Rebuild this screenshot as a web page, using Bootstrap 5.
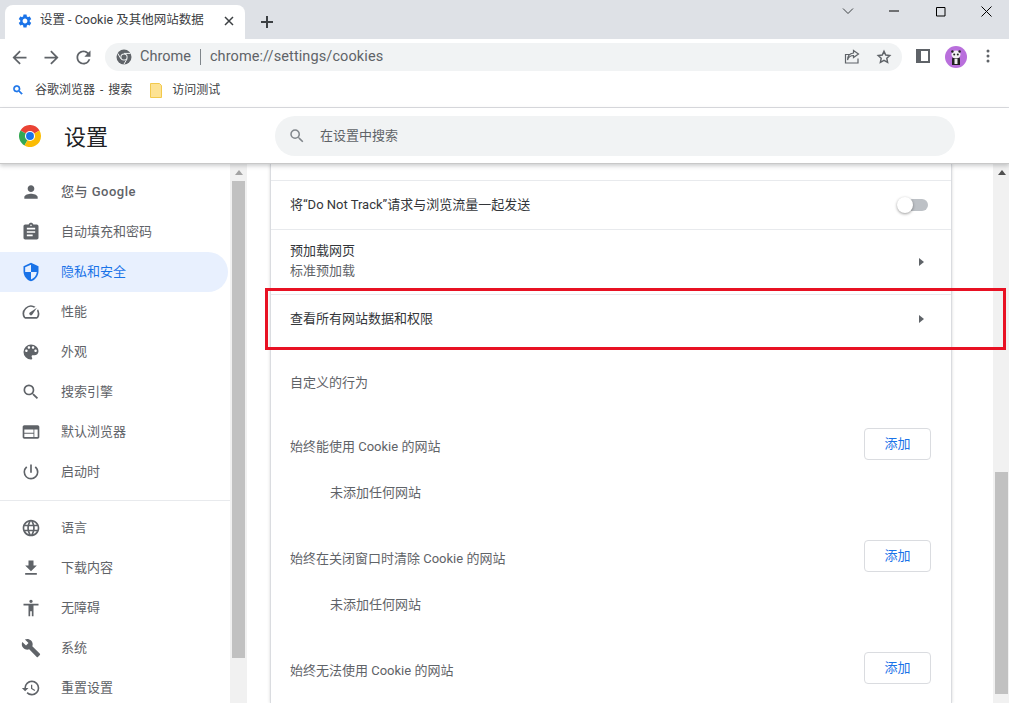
<!DOCTYPE html>
<html lang="zh-CN">
<head>
    <meta charset="UTF-8">
    <title>设置 - Cookie 及其他网站数据</title>
    <link href="https://cdn.jsdelivr.net/npm/bootstrap@5.3.0/dist/css/bootstrap.min.css" rel="stylesheet">
    <style>
        html, body { height: 100%; overflow: hidden; }
        body { font-family: Roboto, "Noto Sans CJK SC", sans-serif; font-size: 13px; color: #33363a; background: #fff; }
        .shell { width: 1009px; height: 703px; position: relative; }

        .tabstrip { height: 39px; background: #dee1e6; padding-left: 5px; }
        .chrome-tab { width: 240px; height: 34px; margin-top: 5px; background: #fff; border-radius: 8px 8px 0 0; padding: 0 11px 3px 12px; font-size: 12.5px; color: #3c4043; }
        .tab-title { margin-left: 7px; white-space: nowrap; }
        .newtab { margin-left: 8px; margin-top: 5px; width: 28px; height: 34px; }
        .win-btns { margin-left: auto; height: 22px; }
        .win-btn { width: 46px; height: 22px; }

        .toolbar { height: 36px; padding: 4px 0 0 9px; }
        .nav-ic { width: 32px; height: 28px; }
        .omni { width: 797px; height: 28px; background: #f1f3f4; border-radius: 14px; padding: 0 10px 0 11px; font-size: 14.5px; color: #5f6368; margin-left: 0; }
        .omni-sep { width: 1px; height: 16px; background: #80868b; margin: 0 9px; }
        .omni-url { letter-spacing: .1px; }
        .tool-right { margin-left: 14px; }
        .panel-ic { width: 29px; }
        .avatar { margin-top: 3px; }
        .dots { margin-left: 19px; }

        .bookmarks { height: 30px; padding: 0 0 2px 12px; font-size: 12px; color: #3c4043; border-bottom: 1px solid #dadce0; box-sizing: content-box; }
        .bm-item { margin-right: 18px; }
        .bm-label { margin-left: 11px; word-spacing: 2px; }
        .bm-label-2 { margin-left: 10px; }

        .settings-head { height: 56px; border-bottom: 1px solid #c8c8c8; box-shadow: 0 2px 4px rgba(60,64,67,.25); position: relative; z-index: 3; background: #fff; }
        .head-left { width: 275px; padding-left: 19px; }
        .head-title { font-size: 22px; margin: 3px 0 0 23px; color: #202124; }
        .head-search { width: 680px; height: 40px; background: #f1f3f4; border-radius: 20px; padding-left: 13px; color: #5f6368; }
        .head-search span { margin-left: 14px; }

        .workarea { height: 539px; overflow: hidden; }
        .side { width: 230px; padding-top: 8px; flex: none; }
        .side-item { height: 40px; padding-left: 21px; color: #5f6368; width: 228px; border-radius: 0 20px 20px 0; }
        .side-item svg { fill: #5f6368; margin-right: 20px; flex: none; }
        .side-item.on { background: #e8f0fe; color: #1a73e8; }
        .side-item.on svg { fill: #1a73e8; }
        .side-item.strong { font-weight: 500; letter-spacing: .5px; }
        .side-rule { height: 1px; background: #e8eaed; margin: 8px 0 7px; }

        .fake-scroll { width: 17px; background: #f1f1f1; flex: none; padding-left: 2px; }
        .scroll-up { height: 17px; width: 13px; padding-top: 6px; }
        .tri-up { display: block; width: 0; height: 0; margin: 0 auto; border: 4px solid transparent; border-top: 0; border-bottom: 5px solid #a3a3a3; }
        .thumb-side { width: 13px; height: 477px; background: #c1c1c1; }

        .content { flex: 1; padding-left: 23px; }
        .settings-card { width: 682px; height: 539px; background: #fff; border-left: 1px solid #dadce0; border-right: 1px solid #dadce0; box-shadow: 0 0 3px rgba(60,64,67,.2); }
        .row-stub { height: 17px; border-bottom: 1px solid #e8eaed; }
        .set-row { padding: 0 27px 0 19px; border-bottom: 1px solid #e8eaed; }
        .h-49 { height: 49px; }
        .h-65 { height: 65px; }
        .set-row .sub { color: #5f6368; line-height: 20px; }
        .set-row .main { line-height: 20px; }
        .nudge-up { margin-bottom: 2px; }
        .tri-right { width: 0; height: 0; border: 4px solid transparent; border-right: 0; border-left: 5px solid #5f6368; }
        .toggle-track { width: 29px; height: 12px; border-radius: 6px; background: #bdc1c6; position: relative; margin-right: -4px; }
        .toggle-knob { position: absolute; left: -2px; top: -2px; width: 16px; height: 16px; border-radius: 50%; background: #fff; box-shadow: 0 1px 3px rgba(0,0,0,.4); }
        .plain-head { color: #5f6368; padding: 29px 0 0 19px; height: 84px; line-height: 20px; }
        .site-head { padding: 0 20px 0 19px; color: #5f6368; height: 32px; }
        .site-label { margin-top: 6px; }
        .add-btn { width: 67px; height: 32px; padding: 0; font-size: 13px; color: #1a73e8; background: #fff; border: 1px solid #dadce0; border-radius: 4px; }
        .empty-note { color: #5f6368; padding-left: 59px; height: 80px; padding-top: 23px; line-height: 20px; }

        .right-scroll { width: 16px; background: #f1f1f1; flex: none; padding-left: 2px; }
        .right-scroll .tri-up { border-bottom-color: #505050; }
        .thumb-main { width: 13px; height: 222px; margin-top: 291px; background: #c1c1c1; }

        .red-mark { position: absolute; left: 265px; top: 288px; width: 741px; height: 62px; border: 3px solid #e81123; z-index: 5; pointer-events: none; }
    </style>
</head>
<body>
<svg width="0" height="0" class="position-absolute">
    <symbol id="i-person" viewBox="0 0 24 24"><path d="M12 12c2.21 0 4-1.79 4-4s-1.79-4-4-4-4 1.79-4 4 1.79 4 4 4zm0 2c-2.67 0-8 1.34-8 4v2h16v-2c0-2.66-5.33-4-8-4z"/></symbol>
    <symbol id="i-clip" viewBox="0 0 24 24"><path d="M19 3h-4.18C14.4 1.84 13.3 1 12 1c-1.3 0-2.4.84-2.82 2H5c-1.1 0-2 .9-2 2v14c0 1.1.9 2 2 2h14c1.1 0 2-.9 2-2V5c0-1.1-.9-2-2-2zm-7 0c.55 0 1 .45 1 1s-.45 1-1 1-1-.45-1-1 .45-1 1-1zm2 14H7v-2h7v2zm3-4H7v-2h10v2zm0-4H7V7h10v2z"/></symbol>
    <symbol id="i-shield" viewBox="0 0 24 24"><path d="M12 1L3 5v6c0 5.55 3.84 10.74 9 12 5.16-1.26 9-6.45 9-12V5l-9-4zm0 10.99h7c-.53 4.12-3.28 7.79-7 8.94V12H5V6.3l7-3.11v8.8z"/></symbol>
    <symbol id="i-speed" viewBox="0 0 24 24"><path d="M20.38 8.57l-1.23 1.85a8 8 0 0 1-.22 7.58H5.07A8 8 0 0 1 15.58 6.85l1.85-1.23A10 10 0 0 0 3.35 19a2 2 0 0 0 1.72 1h13.85a2 2 0 0 0 1.74-1 10 10 0 0 0-.27-10.44zm-9.79 6.84a2 2 0 0 0 2.83 0l5.66-8.49-8.49 5.66a2 2 0 0 0 0 2.83z"/></symbol>
    <symbol id="i-palette" viewBox="0 0 24 24"><path d="M12 3a9 9 0 0 0 0 18c.83 0 1.5-.67 1.5-1.5 0-.39-.15-.74-.39-1.01-.23-.26-.38-.61-.38-.99 0-.83.67-1.5 1.5-1.5H16c2.76 0 5-2.24 5-5 0-4.42-4.03-8-9-8zm-5.5 9c-.83 0-1.5-.67-1.5-1.5S5.67 9 6.5 9 8 9.67 8 10.5 7.33 12 6.5 12zm3-4C8.67 8 8 7.33 8 6.5S8.67 5 9.5 5s1.5.67 1.5 1.5S10.33 8 9.5 8zm5 0c-.83 0-1.5-.67-1.5-1.5S13.67 5 14.5 5s1.5.67 1.5 1.5S15.33 8 14.5 8zm3 4c-.83 0-1.5-.67-1.5-1.5S16.67 9 17.5 9s1.5.67 1.5 1.5-.67 1.5-1.5 1.5z"/></symbol>
    <symbol id="i-search" viewBox="0 0 24 24"><path d="M15.5 14h-.79l-.28-.27A6.471 6.471 0 0 0 16 9.5 6.5 6.5 0 1 0 9.5 16c1.61 0 3.09-.59 4.23-1.57l.27.28v.79l5 4.99L20.49 19l-4.99-5zm-6 0C7.01 14 5 11.99 5 9.5S7.01 5 9.5 5 14 7.01 14 9.5 11.99 14 9.5 14z"/></symbol>
    <symbol id="i-web" viewBox="0 0 24 24"><path d="M20 4H4c-1.1 0-1.99.9-1.99 2L2 18c0 1.1.9 2 2 2h16c1.1 0 2-.9 2-2V6c0-1.1-.9-2-2-2zm-5 14H4v-4h11v4zm0-5H4V9h11v4zm5 5h-4V9h4v9z"/></symbol>
    <symbol id="i-power" viewBox="0 0 24 24"><path d="M13 3h-2v10h2V3zm4.83 2.17l-1.42 1.42A6.92 6.92 0 0 1 19 12c0 3.87-3.13 7-7 7A6.995 6.995 0 0 1 7.58 6.58L6.17 5.17A8.932 8.932 0 0 0 3 12a9 9 0 0 0 18 0c0-2.74-1.23-5.18-3.17-6.83z"/></symbol>
    <symbol id="i-globe" viewBox="0 0 24 24"><path d="M11.99 2C6.47 2 2 6.48 2 12s4.47 10 9.99 10C17.52 22 22 17.52 22 12S17.52 2 11.99 2zm6.93 6h-2.95a15.65 15.65 0 0 0-1.38-3.56A8.03 8.03 0 0 1 18.92 8zM12 4.04c.83 1.2 1.48 2.53 1.91 3.96h-3.82c.43-1.43 1.08-2.76 1.91-3.96zM4.26 14C4.1 13.36 4 12.69 4 12s.1-1.36.26-2h3.38c-.08.66-.14 1.32-.14 2 0 .68.06 1.34.14 2H4.26zm.82 2h2.95c.32 1.25.78 2.45 1.38 3.56A7.987 7.987 0 0 1 5.08 16zm2.95-8H5.08a7.987 7.987 0 0 1 4.33-3.56A15.65 15.65 0 0 0 8.03 8zM12 19.96c-.83-1.2-1.48-2.53-1.91-3.96h3.82c-.43 1.43-1.08 2.76-1.91 3.96zM14.34 14H9.66c-.09-.66-.16-1.32-.16-2 0-.68.07-1.35.16-2h4.68c.09.65.16 1.32.16 2 0 .68-.07 1.34-.16 2zm.25 5.56c.6-1.11 1.06-2.31 1.38-3.56h2.95a8.03 8.03 0 0 1-4.33 3.56zM16.36 14c.08-.66.14-1.32.14-2 0-.68-.06-1.34-.14-2h3.38c.16.64.26 1.31.26 2s-.1 1.36-.26 2h-3.38z"/></symbol>
    <symbol id="i-download" viewBox="0 0 24 24"><path d="M19 9h-4V3H9v6H5l7 7 7-7zM5 18v2h14v-2H5z"/></symbol>
    <symbol id="i-access" viewBox="0 0 24 24"><path d="M12 2c1.1 0 2 .9 2 2s-.9 2-2 2-2-.9-2-2 .9-2 2-2zm9 7h-6v13h-2v-6h-2v6H9V9H3V7h18v2z"/></symbol>
    <symbol id="i-wrench" viewBox="0 0 24 24"><path d="M22.7 19l-9.1-9.1c.9-2.3.4-5-1.5-6.9-2-2-5-2.4-7.4-1.3L9 6 6 9 1.6 4.7C.4 7.1.9 10.1 2.9 12.1c1.9 1.9 4.6 2.4 6.9 1.5l9.1 9.1c.4.4 1 .4 1.4 0l2.3-2.3c.5-.4.5-1.1.1-1.4z"/></symbol>
    <symbol id="i-restore" viewBox="0 0 24 24"><path d="M13 3a9 9 0 0 0-9 9H1l3.89 3.89.07.14L9 12H6c0-3.87 3.13-7 7-7s7 3.13 7 7-3.13 7-7 7c-1.93 0-3.68-.79-4.94-2.06l-1.42 1.42A8.954 8.954 0 0 0 13 21a9 9 0 0 0 0-18zm-1 5v5l4.28 2.54.72-1.21-3.5-2.08V8H12z"/></symbol>
    <symbol id="i-gear" viewBox="0 0 24 24"><path d="M19.14 12.94c.04-.3.06-.61.06-.94 0-.32-.02-.64-.07-.94l2.03-1.58a.49.49 0 0 0 .12-.61l-1.92-3.32a.488.488 0 0 0-.59-.22l-2.39.96c-.5-.38-1.03-.7-1.62-.94l-.36-2.54a.484.484 0 0 0-.48-.41h-3.84c-.24 0-.43.17-.47.41l-.36 2.54c-.59.24-1.13.57-1.62.94l-2.39-.96c-.22-.08-.47 0-.59.22L2.74 8.87c-.12.21-.08.47.12.61l2.03 1.58c-.05.3-.09.63-.09.94s.02.64.07.94l-2.03 1.58a.49.49 0 0 0-.12.61l1.92 3.32c.12.22.37.29.59.22l2.39-.96c.5.38 1.03.7 1.62.94l.36 2.54c.05.24.24.41.48.41h3.84c.24 0 .44-.17.47-.41l.36-2.54c.59-.24 1.13-.56 1.62-.94l2.39.96c.22.08.47 0 .59-.22l1.92-3.32c.12-.22.07-.47-.12-.61l-2.01-1.58zM12 15.6c-1.98 0-3.6-1.62-3.6-3.6s1.62-3.6 3.6-3.6 3.6 1.62 3.6 3.6-1.62 3.6-3.6 3.6z"/></symbol>
</svg>

<div class="shell">
    <!-- tab strip -->
    <div class="tabstrip d-flex">
        <div class="chrome-tab d-flex align-items-center">
            <svg width="16" height="16" fill="#1a73e8"><use href="#i-gear"/></svg>
            <span class="tab-title">设置 - Cookie 及其他网站数据</span>
            <svg class="ms-auto" width="10" height="10" viewBox="0 0 10 10" stroke="#3c4043" stroke-width="1.5"><path d="M1 1l8 8M9 1l-8 8"/></svg>
        </div>
        <div class="newtab d-flex align-items-center justify-content-center">
            <svg width="14" height="14" viewBox="0 0 14 14" stroke="#3c4043" stroke-width="2"><path d="M7 1v12M1 7h12"/></svg>
        </div>
        <div class="win-btns d-flex">
            <div class="win-btn d-flex align-items-center justify-content-center"><svg width="12" height="7" viewBox="0 0 12 7" fill="none" stroke="#3c4043"><path d="M1 .5l5 5 5-5"/></svg></div>
            <div class="win-btn d-flex align-items-center justify-content-center"><svg width="11" height="2" viewBox="0 0 11 2" stroke="#000"><path d="M0 1h10"/></svg></div>
            <div class="win-btn d-flex align-items-center justify-content-center"><svg width="11" height="11" viewBox="0 0 11 11" fill="none" stroke="#000"><path d="M1.500 1.500h8.500v8.500h-8.500z"/></svg></div>
            <div class="win-btn d-flex align-items-center justify-content-center"><svg width="11" height="11" viewBox="0 0 11 11" stroke="#000"><path d="M.5.5l10 10M10.500.5l-10 10"/></svg></div>
        </div>
    </div>

    <!-- toolbar -->
    <div class="toolbar d-flex align-items-start">
        <div class="nav-ic d-flex align-items-center"><svg width="21" height="21" viewBox="0 0 24 24" fill="#5f6368"><path d="M20 11H7.830l5.590-5.590L12 4l-8 8 8 8 1.410-1.410L7.830 13H20z"/></svg></div>
        <div class="nav-ic d-flex align-items-center"><svg width="21" height="21" viewBox="0 0 24 24" fill="#5f6368"><path d="M12 4l-1.410 1.410L16.170 11H4v2h12.170l-5.580 5.590L12 20l8-8z"/></svg></div>
        <div class="nav-ic d-flex align-items-center"><svg width="21" height="21" viewBox="0 0 24 24" fill="#5f6368"><path d="M17.650 6.350A7.958 7.958 0 0 0 12 4c-4.420 0-7.990 3.580-7.990 8s3.570 8 7.990 8c3.730 0 6.840-2.550 7.730-6h-2.080A5.990 5.990 0 0 1 12 18c-3.310 0-6-2.690-6-6s2.690-6 6-6c1.660 0 3.140.69 4.220 1.780L13 11h7V4l-2.350 2.350z"/></svg></div>
        <div class="omni d-flex align-items-center">
            <svg width="16" height="16" viewBox="0 0 16 16"><circle cx="8" cy="8" r="7.500" fill="#5f6368"/><circle cx="8" cy="8" r="3.600" fill="#f1f3f4"/><circle cx="8" cy="8" r="2.600" fill="#5f6368"/><path d="M8 4.400h6.400M4.900 9.800L1.700 4.300M11.100 9.800l-3.200 5.500" stroke="#f1f3f4" stroke-width="1"/></svg>
            <span class="ms-2">Chrome</span>
            <span class="omni-sep"></span>
            <span class="omni-url">chrome://settings/cookies</span>
            <svg class="ms-auto" width="16" height="16" viewBox="0 0 16 16" fill="none" stroke="#5f6368" stroke-width="1.200"><path d="M14 9.500v4.500H1.500V5.500H6M9.500 1.500L14.500 5l-5 3.500V6.500C6.500 6.500 4.500 8 3.500 11c0-4 2.500-6.500 6-7z"/></svg>
            <svg class="ms-3" width="16" height="16" viewBox="0 0 24 24" fill="none" stroke="#5f6368" stroke-width="2.200"><path d="M12 3.500l2.600 5.600 6.100.7-4.500 4.200 1.200 6L12 17l-5.400 3 1.200-6-4.500-4.200 6.100-.7z"/></svg>
        </div>
        <div class="tool-right d-flex align-items-center">
            <div class="panel-ic d-flex align-items-center"><svg width="14" height="14" viewBox="0 0 14 14"><rect width="14" height="14" fill="#5f6368"/><rect x="5" y="2" width="7" height="10" fill="#fff"/></svg></div>
            <svg class="avatar" width="22" height="22" viewBox="0 0 22 22"><circle cx="11" cy="11" r="11" fill="#b96fdc"/><path d="M7 14c0-3 1.500-4 4-4s4 1 4 4v5H7z" fill="#222"/><ellipse cx="11" cy="8.500" rx="4.500" ry="4" fill="#f2f2f2"/><circle cx="9.200" cy="8.500" r="1" fill="#222"/><circle cx="12.800" cy="8.500" r="1" fill="#222"/><circle cx="7.400" cy="5.500" r="1.200" fill="#222"/><circle cx="14.600" cy="5.500" r="1.200" fill="#222"/><rect x="9.500" y="13" width="3" height="5" fill="#eee"/></svg>
            <svg class="dots" width="4" height="14" viewBox="0 0 4 14" fill="#5f6368"><circle cx="2" cy="2" r="1.500"/><circle cx="2" cy="7" r="1.500"/><circle cx="2" cy="12" r="1.500"/></svg>
        </div>
    </div>

    <!-- bookmarks -->
    <div class="bookmarks d-flex align-items-center">
        <div class="bm-item d-flex align-items-center">
            <svg width="12" height="12" viewBox="0 0 24 24" fill="#1a73e8"><path d="M15.500 14h-.79l-.28-.27A6.471 6.471 0 0 0 16 9.500 6.500 6.500 0 1 0 9.500 16c1.610 0 3.090-.59 4.230-1.570l.27.28v.79l5 4.990L20.490 19l-4.990-5zm-6 0C7.010 14 5 11.990 5 9.500S7.010 5 9.500 5 14 7.010 14 9.500 11.990 14 9.500 14z" stroke="#1a73e8" stroke-width="1.500"/></svg>
            <span class="bm-label">谷歌浏览器 - 搜索</span>
        </div>
        <div class="bm-item d-flex align-items-center">
            <svg width="12" height="15" viewBox="0 0 12 15"><path d="M.5.500h9l2 2v12H.5z" fill="#fde293" stroke="#f2c94c"/></svg>
            <span class="bm-label-2">访问测试</span>
        </div>
    </div>

    <!-- settings header -->
    <div class="settings-head d-flex align-items-center">
        <div class="head-left d-flex align-items-center">
            <svg width="22" height="22" viewBox="0 0 24 24">
                <path d="M12 12L1.600 6A12 12 0 0 1 22.400 6z" fill="#ea4335"/>
                <path d="M12 12l-6 10.400A12 12 0 0 1 1.600 6z" fill="#34a853"/>
                <path d="M12 12h12A12 12 0 0 1 6 22.400z" fill="#fbbc04"/>
                <path d="M22.400 6A12 12 0 0 1 24 12H12z" fill="#fbbc04"/>
                <circle cx="12" cy="12" r="5.500" fill="#fff"/>
                <circle cx="12" cy="12" r="4.300" fill="#1a73e8"/>
            </svg>
            <span class="head-title">设置</span>
        </div>
        <div class="head-search d-flex align-items-center">
            <svg width="18" height="18" fill="#80868b"><use href="#i-search"/></svg>
            <span>在设置中搜索</span>
        </div>
    </div>

    <div class="workarea d-flex">
        <!-- left menu -->
        <nav class="side">
            <div class="side-item strong d-flex align-items-center"><svg width="20" height="20"><use href="#i-person"/></svg>您与 Google</div>
            <div class="side-item d-flex align-items-center"><svg width="20" height="20"><use href="#i-clip"/></svg>自动填充和密码</div>
            <div class="side-item on d-flex align-items-center"><svg width="20" height="20"><use href="#i-shield"/></svg>隐私和安全</div>
            <div class="side-item d-flex align-items-center"><svg width="20" height="20"><use href="#i-speed"/></svg>性能</div>
            <div class="side-item d-flex align-items-center"><svg width="20" height="20"><use href="#i-palette"/></svg>外观</div>
            <div class="side-item d-flex align-items-center"><svg width="20" height="20"><use href="#i-search"/></svg>搜索引擎</div>
            <div class="side-item d-flex align-items-center"><svg width="20" height="20"><use href="#i-web"/></svg>默认浏览器</div>
            <div class="side-item d-flex align-items-center"><svg width="20" height="20"><use href="#i-power"/></svg>启动时</div>
            <div class="side-rule"></div>
            <div class="side-item d-flex align-items-center"><svg width="20" height="20"><use href="#i-globe"/></svg>语言</div>
            <div class="side-item d-flex align-items-center"><svg width="20" height="20"><use href="#i-download"/></svg>下载内容</div>
            <div class="side-item d-flex align-items-center"><svg width="20" height="20"><use href="#i-access"/></svg>无障碍</div>
            <div class="side-item d-flex align-items-center"><svg width="20" height="20"><use href="#i-wrench"/></svg>系统</div>
            <div class="side-item d-flex align-items-center"><svg width="20" height="20"><use href="#i-restore"/></svg>重置设置</div>
        </nav>
        <div class="fake-scroll">
            <div class="scroll-up"><span class="tri-up"></span></div>
            <div class="thumb-side"></div>
        </div>

        <!-- main column -->
        <div class="content">
            <div class="settings-card">
                <div class="row-stub"></div>
                <div class="set-row h-49 d-flex align-items-center justify-content-between">
                    <span>将“Do Not Track”请求与浏览流量一起发送</span>
                    <div class="toggle-track"><span class="toggle-knob"></span></div>
                </div>
                <div class="set-row h-65 d-flex align-items-center justify-content-between">
                    <div class="nudge-up"><div class="main">预加载网页</div><div class="sub">标准预加载</div></div>
                    <span class="tri-right"></span>
                </div>
                <div class="set-row h-49 d-flex align-items-center justify-content-between border-0">
                    <span class="nudge-up">查看所有网站数据和权限</span>
                    <span class="tri-right nudge-up"></span>
                </div>
                <div class="plain-head">自定义的行为</div>
                <div class="site-head d-flex align-items-center justify-content-between">
                    <span class="site-label">始终能使用 Cookie 的网站</span>
                    <button class="btn add-btn" type="button">添加</button>
                </div>
                <div class="empty-note">未添加任何网站</div>
                <div class="site-head d-flex align-items-center justify-content-between">
                    <span class="site-label">始终在关闭窗口时清除 Cookie 的网站</span>
                    <button class="btn add-btn" type="button">添加</button>
                </div>
                <div class="empty-note">未添加任何网站</div>
                <div class="site-head d-flex align-items-center justify-content-between">
                    <span class="site-label">始终无法使用 Cookie 的网站</span>
                    <button class="btn add-btn" type="button">添加</button>
                </div>
            </div>
        </div>
        <div class="right-scroll">
            <div class="scroll-up"><span class="tri-up"></span></div>
            <div class="thumb-main"></div>
        </div>
    </div>

    <div class="red-mark"></div>
</div>
<script src="https://cdn.jsdelivr.net/npm/bootstrap@5.3.0/dist/js/bootstrap.bundle.min.js"></script>
</body>
</html>
